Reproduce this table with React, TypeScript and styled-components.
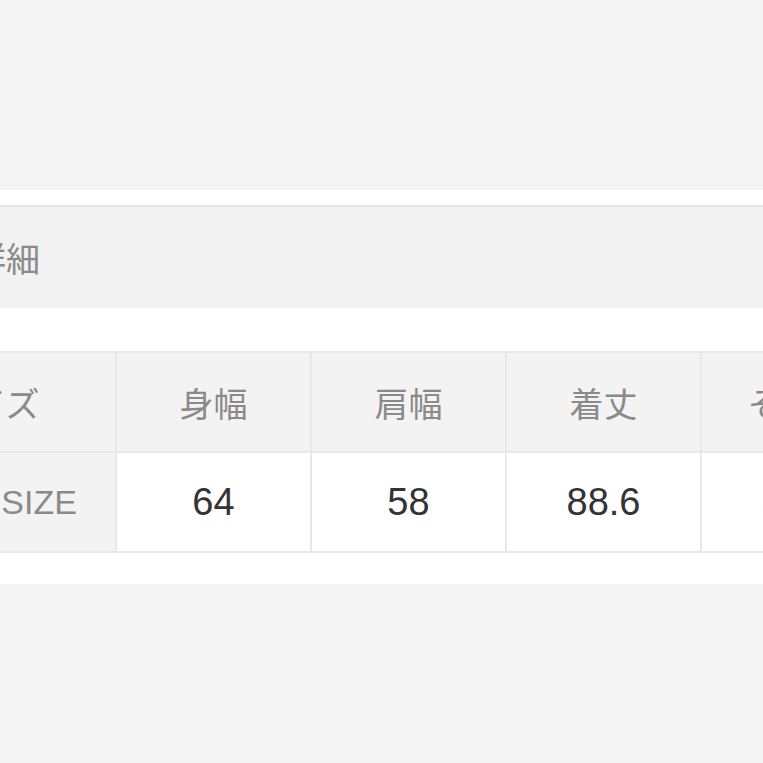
import React from "react";
import styled, { createGlobalStyle } from "styled-components";

const GlobalStyle = createGlobalStyle`
  html, body {
    margin: 0;
    padding: 0;
    background: #f4f4f4;
    overflow: hidden;
  }
  body {
    font-family: "Liberation Sans", "Noto Sans CJK JP", sans-serif;
  }
`;

const TopSpace = styled.div`
  height: 190px;
  background: #f4f4f4;
`;

const Section = styled.section`
  background: #ffffff;
  padding: 15px 0 31px;
`;

// the sheet runs off the left edge of the screen, as in the capture
const Sheet = styled.div`
  margin-left: -139px;
  width: calc(100% + 139px);
`;

const Band = styled.div`
  display: flex;
  align-items: center;
  height: 101px;
  padding-left: 43px;
  border-top: 2px solid #e7e7e7;
  background: #f2f2f2;
  color: #8a8a8a;
  font-size: 34px;
  margin-bottom: 43px;
`;

const Table = styled.table`
  border-collapse: collapse;
  table-layout: fixed;
  width: 1034px;
`;

const Cell = styled.td<{ $head?: boolean; $label?: boolean }>`
  height: 98px;
  padding: 0;
  text-align: center;
  border: 2px solid #e8e8e8;
  background: ${(p) => (p.$head || p.$label ? "#f3f3f3" : "#ffffff")};
  color: ${(p) => (p.$head || p.$label ? "#8a8a8a" : "#333333")};
  font-size: ${(p) => (p.$head ? "34px" : p.$label ? "34px" : "38px")};
  white-space: nowrap;
  overflow: hidden;
`;

const Bottom = styled.div`
  height: 200px;
  background: #f4f4f4;
`;

const columns = ["身幅", "肩幅", "着丈", "そで丈"];
const values = ["64", "58", "88.6", "58.5"];

export default function App() {
  return (
    <>
      <GlobalStyle />
      <TopSpace />
      <Section>
        <Sheet>
          <Band>商品詳細</Band>
          <Table>
            <colgroup>
              <col style={{ width: 254 }} />
              {columns.map((c) => (
                <col key={c} style={{ width: 195 }} />
              ))}
            </colgroup>
            <tbody>
              <tr>
                <Cell $head>サイズ</Cell>
                {columns.map((c) => (
                  <Cell key={c} $head>
                    {c}
                  </Cell>
                ))}
              </tr>
              <tr>
                <Cell $label>FREE SIZE</Cell>
                {values.map((v, i) => (
                  <Cell key={i}>{v}</Cell>
                ))}
              </tr>
            </tbody>
          </Table>
        </Sheet>
      </Section>
      <Bottom />
    </>
  );
}
